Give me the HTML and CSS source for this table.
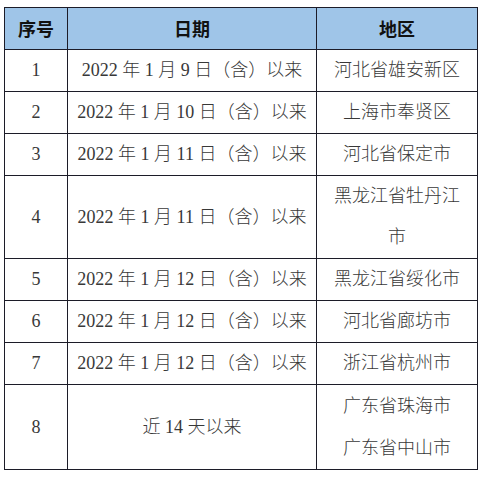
FILE: index.html
```html
<!DOCTYPE html>
<html lang="zh">
<head>
<meta charset="utf-8">
<link rel="stylesheet" href="styles.css">
</head>
<body>
<table class="list">
  <colgroup>
    <col class="c-no">
    <col class="c-date">
    <col class="c-area">
  </colgroup>
  <thead>
    <tr><th>序号</th><th>日期</th><th>地区</th></tr>
  </thead>
  <tbody>
    <tr><td class="num">1</td><td class="date">2022 年 1 月 9 日（含）以来</td><td>河北省雄安新区</td></tr>
    <tr><td class="num">2</td><td class="date">2022 年 1 月 10 日（含）以来</td><td>上海市奉贤区</td></tr>
    <tr><td class="num">3</td><td class="date">2022 年 1 月 11 日（含）以来</td><td>河北省保定市</td></tr>
    <tr><td class="num">4</td><td class="date">2022 年 1 月 11 日（含）以来</td><td>黑龙江省牡丹江市</td></tr>
    <tr><td class="num">5</td><td class="date">2022 年 1 月 12 日（含）以来</td><td>黑龙江省绥化市</td></tr>
    <tr><td class="num">6</td><td class="date">2022 年 1 月 12 日（含）以来</td><td>河北省廊坊市</td></tr>
    <tr><td class="num">7</td><td class="date">2022 年 1 月 12 日（含）以来</td><td>浙江省杭州市</td></tr>
    <tr class="last"><td class="num">8</td><td class="date">近 14 天以来</td><td class="multi">广东省珠海市<br>广东省中山市</td></tr>
  </tbody>
</table>
</body>
</html>
```
FILE: styles.css
```css
html, body {
  margin: 0;
  padding: 0;
  background: #ffffff;
}
body {
  padding: 7px 0 0 4px;
}
.list {
  border-collapse: collapse;
  table-layout: fixed;
  width: 473px;
  font-family: "Liberation Serif", "Noto Sans CJK SC", serif;
  font-size: 18px;
  color: #383838;
}
.c-no { width: 63px; }
.c-date { width: 249px; }
.c-area { width: 161px; }
.list th, .list td {
  border: 1px solid #1c1c28;
  text-align: center;
  vertical-align: middle;
  padding: 0 10px;
  line-height: 41px;
  height: 41px;
}
.list th {
  background: #9fc5e8;
  font-family: "Noto Sans CJK SC", sans-serif;
  font-weight: 700;
  color: #111111;
}
.list td {
  font-weight: 300;
}
.list td.date {
  padding: 0;
  white-space: nowrap;
}
.list td.multi {
  line-height: 42px;
}
```
